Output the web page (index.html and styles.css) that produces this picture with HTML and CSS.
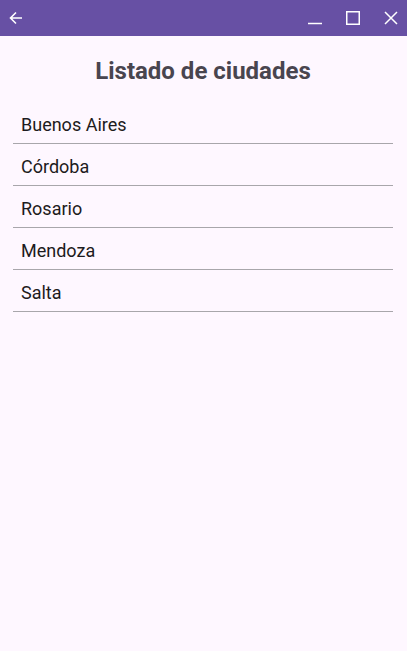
FILE: index.html
```html
<!DOCTYPE html>
<html lang="es">
<head>
<meta charset="utf-8">
<title>Listado de ciudades</title>
<link rel="stylesheet" href="styles.css">
</head>
<body>
<header class="titlebar">
  <button class="tb-btn back" aria-label="Atrás">
    <svg width="14" height="14" viewBox="0 0 14 14"><path d="M13 7H1.8M7 1.5L1.5 7L7 12.5" fill="none" stroke="#fff" stroke-width="1.6"/></svg>
  </button>
  <div class="spacer"></div>
  <div class="win-controls">
    <button class="tb-btn" aria-label="Minimizar">
      <svg width="14" height="14" viewBox="0 0 14 14"><path d="M0 12.5H14" stroke="#fff" stroke-width="1.5"/></svg>
    </button>
    <button class="tb-btn" aria-label="Maximizar">
      <svg width="14" height="14" viewBox="0 0 14 14"><rect x="0.75" y="0.75" width="12.5" height="12.5" fill="none" stroke="#fff" stroke-width="1.5"/></svg>
    </button>
    <button class="tb-btn" aria-label="Cerrar">
      <svg width="14" height="14" viewBox="0 0 14 14"><path d="M1 1L13 13M13 1L1 13" stroke="#fff" stroke-width="1.5"/></svg>
    </button>
  </div>
</header>
<main class="content">
  <h1 class="title">Listado de ciudades</h1>
  <ul class="city-list">
    <li class="city">Buenos Aires</li>
    <li class="city">Córdoba</li>
    <li class="city">Rosario</li>
    <li class="city">Mendoza</li>
    <li class="city">Salta</li>
  </ul>
</main>
</body>
</html>
```
FILE: styles.css
```css
html, body {
  margin: 0;
  padding: 0;
  height: 100%;
}
body {
  background: #fef7ff;
  font-family: Roboto, "Liberation Sans", sans-serif;
}
.titlebar {
  height: 36px;
  background: #6750a4;
  display: flex;
  align-items: center;
  padding: 0 4px 0 9px;
}
.spacer { flex: 1; }
.win-controls {
  display: flex;
  gap: 14px;
}
.tb-btn {
  background: none;
  border: 0;
  padding: 0;
  width: 24px;
  height: 36px;
  display: flex;
  align-items: center;
  justify-content: center;
}
.tb-btn.back {
  width: 14px;
  justify-content: flex-start;
}
.content {
  padding: 0 14px 0 13px;
}
.title {
  margin: 0;
  padding: 21px 0 0;
  text-align: center;
  font-size: 24px;
  font-weight: 700;
  color: #49454f;
  line-height: 28px;
}
.city-list {
  list-style: none;
  margin: 17px 0 0;
  padding: 0;
}
.city {
  box-sizing: border-box;
  height: 42px;
  border-bottom: 1px solid #a8a6ab;
  padding: 3px 8px 0;
  display: flex;
  align-items: center;
  font-size: 18px;
  color: #1d1b20;
}
```
